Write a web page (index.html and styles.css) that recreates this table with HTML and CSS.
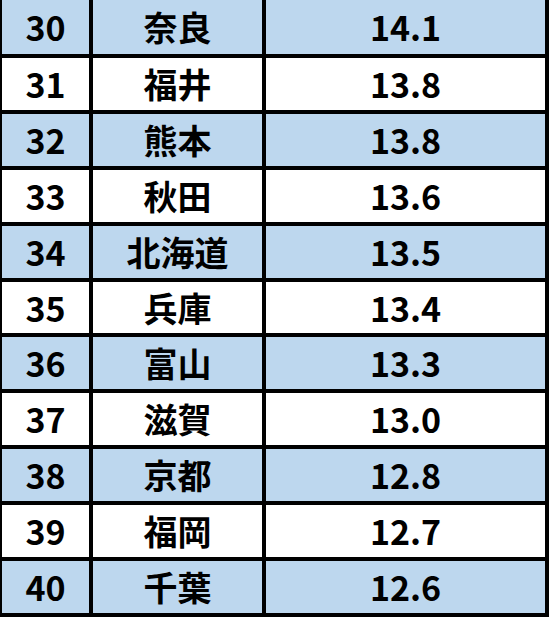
FILE: index.html
```html
<!DOCTYPE html>
<html lang="ja">
<head>
<meta charset="utf-8">
<link rel="stylesheet" href="styles.css">
</head>
<body>
<table class="rank">
  <tbody>
    <tr class="blue first"><td class="no">30</td><td class="pref">奈良</td><td class="val">14.1</td></tr>
    <tr><td class="no">31</td><td class="pref">福井</td><td class="val">13.8</td></tr>
    <tr class="blue"><td class="no">32</td><td class="pref">熊本</td><td class="val">13.8</td></tr>
    <tr><td class="no">33</td><td class="pref">秋田</td><td class="val">13.6</td></tr>
    <tr class="blue"><td class="no">34</td><td class="pref">北海道</td><td class="val">13.5</td></tr>
    <tr><td class="no">35</td><td class="pref">兵庫</td><td class="val">13.4</td></tr>
    <tr class="blue"><td class="no">36</td><td class="pref">富山</td><td class="val">13.3</td></tr>
    <tr><td class="no">37</td><td class="pref">滋賀</td><td class="val">13.0</td></tr>
    <tr class="blue"><td class="no">38</td><td class="pref">京都</td><td class="val">12.8</td></tr>
    <tr><td class="no">39</td><td class="pref">福岡</td><td class="val">12.7</td></tr>
    <tr class="blue"><td class="no">40</td><td class="pref">千葉</td><td class="val">12.6</td></tr>
  </tbody>
</table>
</body>
</html>
```
FILE: styles.css
```css
html, body {
  margin: 0;
  padding: 0;
  background: #ffffff;
}

.rank {
  border-collapse: separate;
  border-spacing: 0;
  table-layout: fixed;
  width: 549px;
  font-family: "Noto Sans CJK JP", "Noto Sans", sans-serif;
  font-weight: 700;
  font-size: 34px;
  color: #000;
}

.rank td {
  padding: 0;
  height: 51.9px;
  text-align: center;
  vertical-align: middle;
  line-height: 1;
  border-right: 4px solid #000;
  border-bottom: 4px solid #000;
  box-sizing: content-box;
}

.rank tr.first td {
  height: 54px;
}

.rank tr.blue td {
  background: #bdd7ee;
}

.rank td.no {
  width: 87px;
  border-left: 2px solid #000;
}

.rank td.pref {
  width: 169px;
}

.rank td.val {
  width: 279px;
}
```
